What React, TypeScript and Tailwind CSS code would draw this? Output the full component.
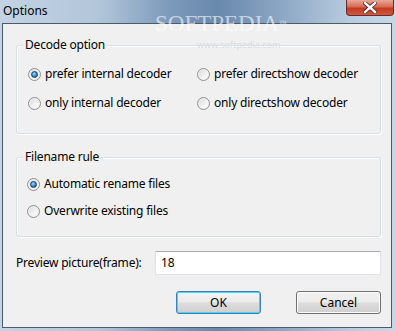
import React from "react";

const font = { fontFamily: '"Noto Sans", "Open Sans", sans-serif' };

function Radio({ checked, label }: { checked?: boolean; label: string }) {
  return (
    <div className="flex items-center gap-[4px]">
      <div className="w-[13px] h-[13px] rounded-full border border-[#8e8f8f] bg-[linear-gradient(135deg,#d8d8d8,#f4f4f4_60%,#ffffff)] flex items-center justify-center shadow-[inset_0_0_0_1px_#f2f2f2]">
        {checked && (
          <div className="w-[7px] h-[7px] rounded-full border border-[#1b3f63] bg-[radial-gradient(circle_at_40%_35%,#a6dcff,#2c86cf_55%,#114a7e)]" />
        )}
      </div>
      <span className="text-[12px] leading-[16px] tracking-[-0.2px] text-[#000]">{label}</span>
    </div>
  );
}

function Group({
  title,
  className,
  children,
}: {
  title: string;
  className: string;
  children: React.ReactNode;
}) {
  return (
    <div
      className={
        "relative rounded-[3px] border border-[#d5dfe5] shadow-[inset_1px_1px_0_#ffffff,1px_1px_0_#ffffff] " +
        className
      }
    >
      <span className="absolute left-[6px] -top-[9px] bg-[#f0f0f0] px-[2px] text-[12px] leading-[16px] tracking-[-0.2px] text-[#000]">
        {title}
      </span>
      {children}
    </div>
  );
}

function Button({ label, primary }: { label: string; primary?: boolean }) {
  return (
    <div
      className={
        "w-[85px] h-[23px] rounded-[3px] border flex items-center justify-center text-[12px] text-[#000] bg-[linear-gradient(to_bottom,#f2f2f2_0%,#ebebeb_48%,#dddddd_52%,#cfcfcf_100%)] " +
        (primary
          ? "border-[#3c7fb1] shadow-[inset_0_0_0_1px_#48d5fd]"
          : "border-[#707070] shadow-[inset_0_0_0_1px_#fcfcfc]")
      }
    >
      {label}
    </div>
  );
}

export default function App() {
  return (
    <div
      style={font}
      className="relative w-[396px] h-[331px] overflow-hidden bg-[linear-gradient(to_right,#c3d3e3_0%,#b2c6da_25%,#7e9cbc_42%,#6888ad_55%,#8ea9c5_72%,#b8cbdf_88%,#c9d8e6_100%)]"
    >
      {/* title bar */}
      <div className="h-[23px] flex items-center pl-[3px]">
        <span className="text-[12px] leading-[16px] text-[#000] -mt-[1px]">Options</span>
      </div>
      {/* close button */}
      <div className="absolute right-[2px] top-0 w-[48px] h-[16px] rounded-b-[4px] border border-t-0 border-[#6b2a2a] bg-[linear-gradient(to_bottom,#e9a99a_0%,#d86a56_45%,#c23a22_55%,#d0583e_100%)] flex items-center justify-center">
        <svg width="14" height="11" viewBox="0 0 14 11">
          <path
            d="M2 1 L12 10 M12 1 L2 10"
            stroke="#4a2020"
            strokeWidth="4"
            strokeLinecap="square"
          />
          <path
            d="M2 1 L12 10 M12 1 L2 10"
            stroke="#ffffff"
            strokeWidth="2.4"
            strokeLinecap="square"
          />
        </svg>
      </div>

      {/* client area */}
      <div className="ml-[2px] w-[390px] h-[305px] border border-[#4c5a6a] bg-[#f0f0f0] pt-[21px] pl-[13px]">
        <Group title="Decode option" className="w-[365px] h-[89px]">
          <div className="grid grid-cols-[169px_1fr] gap-y-[13px] pl-[11px] pt-[20px]">
            <Radio checked label="prefer internal decoder" />
            <Radio label="prefer directshow decoder" />
            <Radio label="only internal decoder" />
            <Radio label="only directshow decoder" />
          </div>
        </Group>

        <Group title="Filename rule" className="w-[365px] h-[80px] mt-[23px]">
          <div className="flex flex-col gap-[11px] pl-[10px] pt-[18px]">
            <Radio checked label="Automatic rename files" />
            <Radio label="Overwrite existing files" />
          </div>
        </Group>

        <div className="flex items-center mt-[14px]">
          <span className="w-[139px] text-[12px] leading-[16px] tracking-[-0.2px] text-[#000]">
            Preview picture(frame):
          </span>
          <div className="w-[226px] h-[24px] border border-[#e2e3ea] border-t-[#abadb3] bg-white flex items-center pl-[5px] text-[12px] text-[#000]">
            18
          </div>
        </div>

        <div className="flex justify-end gap-[35px] mt-[16px] pr-[10px]">
          <Button label="OK" primary />
          <Button label="Cancel" />
        </div>
      </div>

      {/* watermark */}
      <div
        className="pointer-events-none absolute left-[155px] top-[13px] text-[23px] leading-[22px] text-white/60"
        style={{ fontFamily: '"Liberation Serif", serif' }}
      >
        SOFTPEDIA<span className="text-[8px] align-top">™</span>
      </div>
      <div className="pointer-events-none absolute left-[197px] top-[40px] text-[9px] leading-[10px] text-[#d8dde2]">
        www.softpedia.com
      </div>
    </div>
  );
}
